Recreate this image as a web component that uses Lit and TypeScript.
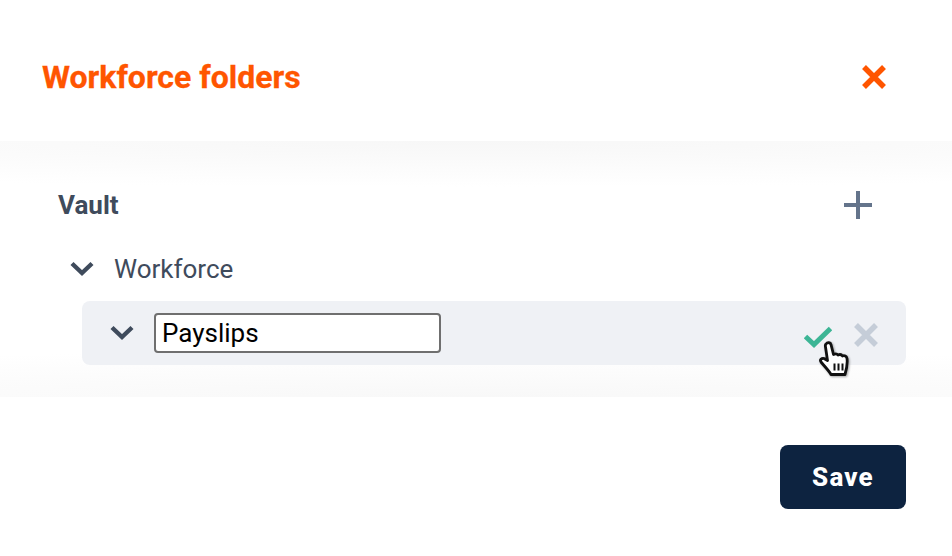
import { LitElement, html, css } from "lit";
import { customElement } from "lit/decorators.js";

@customElement("app-root")
export class AppRoot extends LitElement {
  static styles = css`
    :host { display: block; width: 952px; height: 556px; background: #fff; font-family: Roboto, "Liberation Sans", sans-serif; overflow: hidden; }
    * { box-sizing: border-box; }
    .header { height: 141px; padding: 12px 64px 0 42px; display: flex; align-items: center; justify-content: space-between; }
    h1 { margin: 0; font-size: 32px; font-weight: 700; color: #ff5500; line-height: 36px; -webkit-text-stroke: 0.3px #ff5500; }
    .close { width: 28px; height: 28px; display: block; }
    .body { height: 256px; padding: 32px 46px 32px 58px; position: relative; overflow: hidden; background:
      radial-gradient(ellipse 120% 46px at 50% 0, #f7f7f7, #fff) top / 100% 46px no-repeat,
      radial-gradient(ellipse 120% 46px at 50% 100%, #f8f8f8, #fff) bottom / 100% 46px no-repeat,
      #fff; }
    .row { height: 64px; display: flex; align-items: center; color: #3f4b5c; font-size: 26px; }
    .vault { justify-content: space-between; font-weight: 700; padding-right: 34px; }
    .plus { width: 28px; height: 28px; display: block; }
    .wf { gap: 20px; padding-left: 12px; }
    .chev { width: 24px; height: 24px; display: block; flex: none; }
    .selected { position: relative; margin-left: 24px; background: #eff1f5; border-radius: 8px; padding: 0 26px 0 28px; }
    .selected .chev { margin-right: 20px; }
    input { width: 287px; height: 40px; border: 2px solid #6f6f6f; border-radius: 4px; padding: 0 6px; font: 400 26px Roboto, sans-serif; color: #000; background: #fff; outline: none; }
    .actions { margin-left: auto; display: flex; align-items: center; gap: 20px; padding-top: 4px; }
    .act { width: 28px; height: 28px; display: block; }
    .cursor { position: absolute; left: 737px; top: 41px; width: 32px; height: 34px; overflow: visible; filter: drop-shadow(1px 1px 1px rgba(0,0,0,.35)); }
    .footer { height: 159px; padding: 48px 46px 0 0; display: flex; justify-content: flex-end; align-items: flex-start; }
    button { width: 126px; height: 64px; border: 0; border-radius: 8px; background: #0d2340; color: #fff; font: 800 26px Roboto, sans-serif; letter-spacing: 1.2px; }
  `;

  render() {
    const chevron = html`<svg class="chev" viewBox="0 0 24 24" fill="none" stroke="#3f4b5c" stroke-width="4.400"><path d="M2 6.500 12 16 22 6.500"/></svg>`;
    return html`
      <div class="header">
        <h1>Workforce folders</h1>
        <svg class="close" viewBox="0 0 28 28" fill="none" stroke="#ff5500" stroke-width="5.500"><path d="M4 4 24 24M24 4 4 24"/></svg>
      </div>
      <div class="body">
        <div class="row vault"><span>Vault</span>
          <svg class="plus" viewBox="0 0 28 28" fill="#64748b"><path d="M12 0h4v12H28v4H16V28h-4V16H0v-4h12z"/></svg>
        </div>
        <div class="row wf">${chevron}<span>Workforce</span></div>
        <div class="row selected">
          ${chevron}
          <input .value=${"Payslips"} />
          <div class="actions">
            <svg class="act" viewBox="0 0 28 28" fill="none" stroke="#3cb595" stroke-width="5"><path d="M1.500 15.500 10 23.500 26.500 7.500"/></svg>
            <svg class="act" viewBox="0 0 28 28" fill="none" stroke="#c5cdd8" stroke-width="5.500"><path d="M4 4 24 24M24 4 4 24"/></svg>
          </div>
          <svg class="cursor" viewBox="0 0 32 34"><path d="M7 2c1.500-2 4.500-1.500 5 .5l2.500 10c2-1 3.500-.8 4.500.5 2-1 3.500-.5 4.500 1 2-.8 4 .2 4.500 2.500.6 4 0 9-2 16H12c-1.500-3-5-6.500-10-12.500-1.500-2 .5-4 3-3.500l3.500 2L6.500 5c-.3-1-.2-2.200.5-3z" fill="#fff" stroke="#111" stroke-width="2.800" stroke-linejoin="round"/><path d="M15.500 21.500v7M19.500 21.500v7M23.500 21.500v7" stroke="#111" stroke-width="2"/></svg>
        </div>
      </div>
      <div class="footer"><button>Save</button></div>
    `;
  }
}
